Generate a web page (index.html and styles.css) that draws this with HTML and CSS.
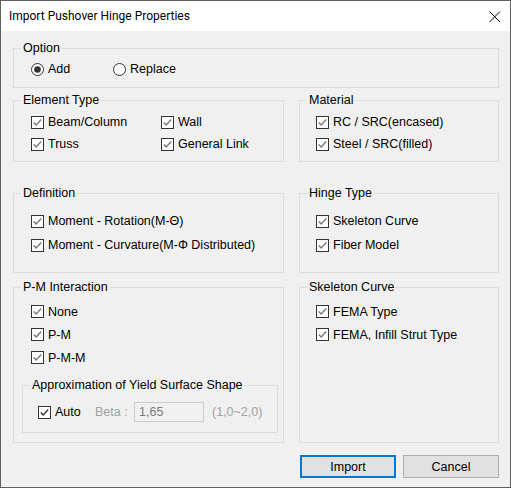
FILE: index.html
```html
<!DOCTYPE html>
<html>
<head>
<meta charset="utf-8">
<title>Import Pushover Hinge Properties</title>
<link rel="stylesheet" href="styles.css">
</head>
<body>
<div class="window">
  <div class="titlebar">
    <span class="title">Import Pushover Hinge Properties</span>
    <svg class="close" width="12" height="11" viewBox="0 0 12 11"><path d="M0.5 0.5L11 11M11 0.5L0.5 11" stroke="#000" stroke-width="1" fill="none"/></svg>
  </div>
  <div class="body">
    <fieldset class="group">
      <legend>Option</legend>
      <div class="content option-content">
        <label class="item radio-add">
          <svg class="rb" width="13" height="13" viewBox="0 0 13 13"><circle cx="6.5" cy="6.5" r="6" fill="#fff" stroke="#333" stroke-width="1"/><circle cx="6.5" cy="6.5" r="3.3" fill="#333"/></svg>
          <span>Add</span>
        </label>
        <label class="item">
          <svg class="rb" width="13" height="13" viewBox="0 0 13 13"><circle cx="6.5" cy="6.5" r="6" fill="#fff" stroke="#333" stroke-width="1"/></svg>
          <span>Replace</span>
        </label>
      </div>
    </fieldset>

    <div class="row row1">
      <fieldset class="group col-left">
        <legend>Element Type</legend>
        <div class="content element-content">
          <label class="item"><svg class="cb" width="13" height="13" viewBox="0 0 13 13"><rect x="0.5" y="0.5" width="12" height="12" fill="#fff" stroke="#333"/><path d="M2.8 6.4L5.2 8.9L10.2 3.6" stroke="#777" stroke-width="1.4" fill="none"/></svg><span>Beam/Column</span></label>
          <label class="item"><svg class="cb" width="13" height="13" viewBox="0 0 13 13"><rect x="0.5" y="0.5" width="12" height="12" fill="#fff" stroke="#333"/><path d="M2.8 6.4L5.2 8.9L10.2 3.6" stroke="#777" stroke-width="1.4" fill="none"/></svg><span>Wall</span></label>
          <label class="item"><svg class="cb" width="13" height="13" viewBox="0 0 13 13"><rect x="0.5" y="0.5" width="12" height="12" fill="#fff" stroke="#333"/><path d="M2.8 6.4L5.2 8.9L10.2 3.6" stroke="#777" stroke-width="1.4" fill="none"/></svg><span>Truss</span></label>
          <label class="item"><svg class="cb" width="13" height="13" viewBox="0 0 13 13"><rect x="0.5" y="0.5" width="12" height="12" fill="#fff" stroke="#333"/><path d="M2.8 6.4L5.2 8.9L10.2 3.6" stroke="#777" stroke-width="1.4" fill="none"/></svg><span>General Link</span></label>
        </div>
      </fieldset>
      <fieldset class="group col-right">
        <legend>Material</legend>
        <div class="content material-content">
          <label class="item"><svg class="cb" width="13" height="13" viewBox="0 0 13 13"><rect x="0.5" y="0.5" width="12" height="12" fill="#fff" stroke="#333"/><path d="M2.8 6.4L5.2 8.9L10.2 3.6" stroke="#777" stroke-width="1.4" fill="none"/></svg><span>RC / SRC(encased)</span></label>
          <label class="item"><svg class="cb" width="13" height="13" viewBox="0 0 13 13"><rect x="0.5" y="0.5" width="12" height="12" fill="#fff" stroke="#333"/><path d="M2.8 6.4L5.2 8.9L10.2 3.6" stroke="#777" stroke-width="1.4" fill="none"/></svg><span>Steel / SRC(filled)</span></label>
        </div>
      </fieldset>
    </div>

    <div class="row row2">
      <fieldset class="group col-left">
        <legend>Definition</legend>
        <div class="content definition-content">
          <label class="item"><svg class="cb" width="13" height="13" viewBox="0 0 13 13"><rect x="0.5" y="0.5" width="12" height="12" fill="#fff" stroke="#333"/><path d="M2.8 6.4L5.2 8.9L10.2 3.6" stroke="#777" stroke-width="1.4" fill="none"/></svg><span>Moment - Rotation(M-Θ)</span></label>
          <label class="item"><svg class="cb" width="13" height="13" viewBox="0 0 13 13"><rect x="0.5" y="0.5" width="12" height="12" fill="#fff" stroke="#333"/><path d="M2.8 6.4L5.2 8.9L10.2 3.6" stroke="#777" stroke-width="1.4" fill="none"/></svg><span>Moment - Curvature(M-Φ Distributed)</span></label>
        </div>
      </fieldset>
      <fieldset class="group col-right">
        <legend>Hinge Type</legend>
        <div class="content hinge-content">
          <label class="item"><svg class="cb" width="13" height="13" viewBox="0 0 13 13"><rect x="0.5" y="0.5" width="12" height="12" fill="#fff" stroke="#333"/><path d="M2.8 6.4L5.2 8.9L10.2 3.6" stroke="#777" stroke-width="1.4" fill="none"/></svg><span>Skeleton Curve</span></label>
          <label class="item"><svg class="cb" width="13" height="13" viewBox="0 0 13 13"><rect x="0.5" y="0.5" width="12" height="12" fill="#fff" stroke="#333"/><path d="M2.8 6.4L5.2 8.9L10.2 3.6" stroke="#777" stroke-width="1.4" fill="none"/></svg><span>Fiber Model</span></label>
        </div>
      </fieldset>
    </div>

    <div class="row row3">
      <fieldset class="group col-left">
        <legend>P-M Interaction</legend>
        <div class="content pm-content">
          <div class="pm-list">
            <label class="item"><svg class="cb" width="13" height="13" viewBox="0 0 13 13"><rect x="0.5" y="0.5" width="12" height="12" fill="#fff" stroke="#333"/><path d="M2.8 6.4L5.2 8.9L10.2 3.6" stroke="#777" stroke-width="1.4" fill="none"/></svg><span>None</span></label>
            <label class="item"><svg class="cb" width="13" height="13" viewBox="0 0 13 13"><rect x="0.5" y="0.5" width="12" height="12" fill="#fff" stroke="#333"/><path d="M2.8 6.4L5.2 8.9L10.2 3.6" stroke="#777" stroke-width="1.4" fill="none"/></svg><span>P-M</span></label>
            <label class="item"><svg class="cb" width="13" height="13" viewBox="0 0 13 13"><rect x="0.5" y="0.5" width="12" height="12" fill="#fff" stroke="#333"/><path d="M2.8 6.4L5.2 8.9L10.2 3.6" stroke="#777" stroke-width="1.4" fill="none"/></svg><span>P-M-M</span></label>
          </div>
          <fieldset class="group approx">
            <legend>Approximation of Yield Surface Shape</legend>
            <div class="content approx-content">
              <label class="item auto"><svg class="cb" width="13" height="13" viewBox="0 0 13 13"><rect x="0.5" y="0.5" width="12" height="12" fill="#fff" stroke="#333"/><path d="M2.8 6.4L5.2 8.9L10.2 3.6" stroke="#333" stroke-width="1.4" fill="none"/></svg><span>Auto</span></label>
              <span class="beta">Beta :</span>
              <span class="input">1,65</span>
              <span class="range">(1,0~2,0)</span>
            </div>
          </fieldset>
        </div>
      </fieldset>
      <fieldset class="group col-right">
        <legend>Skeleton Curve</legend>
        <div class="content skeleton-content">
          <label class="item"><svg class="cb" width="13" height="13" viewBox="0 0 13 13"><rect x="0.5" y="0.5" width="12" height="12" fill="#fff" stroke="#333"/><path d="M2.8 6.4L5.2 8.9L10.2 3.6" stroke="#777" stroke-width="1.4" fill="none"/></svg><span>FEMA Type</span></label>
          <label class="item"><svg class="cb" width="13" height="13" viewBox="0 0 13 13"><rect x="0.5" y="0.5" width="12" height="12" fill="#fff" stroke="#333"/><path d="M2.8 6.4L5.2 8.9L10.2 3.6" stroke="#777" stroke-width="1.4" fill="none"/></svg><span>FEMA, Infill Strut Type</span></label>
        </div>
      </fieldset>
    </div>

    <div class="buttons">
      <button class="btn btn-default">Import</button>
      <button class="btn">Cancel</button>
    </div>
  </div>
</div>
</body>
</html>
```

FILE: styles.css
```css
* { box-sizing: border-box; }

html, body {
  margin: 0;
  padding: 0;
}

body {
  width: 511px;
  height: 488px;
  overflow: hidden;
  background: #f0f0f0;
  font-family: "Liberation Sans", Arial, sans-serif;
  font-size: 12.5px;
  color: #000;
}

.window {
  width: 511px;
  height: 488px;
  border: 1px solid #5f5f5f;
  background: #f0f0f0;
  display: flex;
  flex-direction: column;
}

.titlebar {
  flex: none;
  height: 30px;
  background: #fff;
  display: flex;
  align-items: center;
  justify-content: space-between;
  padding: 0 9px 0 8px;
}

.title {
  font-family: Roboto, "Liberation Sans", sans-serif;
  font-size: 12px;
  color: #000;
}

.close { display: block; }

.body {
  padding: 10px 11px 0 12px;
}

fieldset.group {
  margin: 0;
  padding: 0;
  border: 1px solid #dcdcdc;
  min-width: 0;
}

legend {
  padding: 0 2px;
  margin-left: 7px;
  height: 14px;
  line-height: 14px;
  font-size: 12.5px;
}

.item {
  display: flex;
  align-items: center;
  gap: 4px;
  white-space: nowrap;
}

.cb, .rb { display: block; flex: none; }

.option-content {
  display: flex;
  padding: 6px 0 10px 17px;
}
.option-content .item { height: 16px; }
.radio-add { width: 82px; }

.row {
  display: flex;
  gap: 15px;
  align-items: stretch;
}
.col-left { width: 271px; }
.col-right { width: 200px; }

.row1 { margin-top: 5px; height: 69px; }
.row2 { margin-top: 24px; height: 87px; }
.row3 { margin-top: 7px; height: 163px; }

.element-content {
  display: grid;
  grid-template-columns: 130px auto;
  grid-auto-rows: 22px;
  padding: 4px 0 0 17px;
}
.material-content {
  display: grid;
  grid-auto-rows: 22px;
  padding: 4px 0 0 16px;
}

.definition-content {
  display: grid;
  grid-auto-rows: 24px;
  padding: 9px 0 0 17px;
}
.hinge-content {
  display: grid;
  grid-auto-rows: 24px;
  padding: 9px 0 0 16px;
}

.pm-content {
  padding: 6px 5px 9px 0;
}
.pm-list {
  display: grid;
  grid-auto-rows: 23px;
  padding-left: 17px;
}
fieldset.approx {
  margin: 9px 0 0 8px;
}
.approx-content {
  display: flex;
  align-items: center;
  height: 40px;
  padding: 10px 0 10px 15px;
}
.auto { width: 57px; }
.beta {
  width: 39px;
  color: #a0a0a0;
}
.input {
  width: 70px;
  height: 20px;
  border: 1px solid #cccccc;
  background: #f0f0f0;
  color: #7a7a7a;
  padding: 0 4px;
  line-height: 18px;
}
.range {
  margin-left: 8px;
  color: #a0a0a0;
}

.skeleton-content {
  display: grid;
  grid-auto-rows: 23px;
  padding: 6px 0 0 16px;
}

.buttons {
  display: flex;
  justify-content: flex-end;
  gap: 7px;
  margin-top: 12px;
}
.btn {
  width: 96px;
  height: 23px;
  margin: 0;
  padding: 0;
  background: #e1e1e1;
  border: 1px solid #adadad;
  font-family: "Liberation Sans", Arial, sans-serif;
  font-size: 12.5px;
  color: #000;
}
.btn-default {
  border: 2px solid #0078d7;
}
```
